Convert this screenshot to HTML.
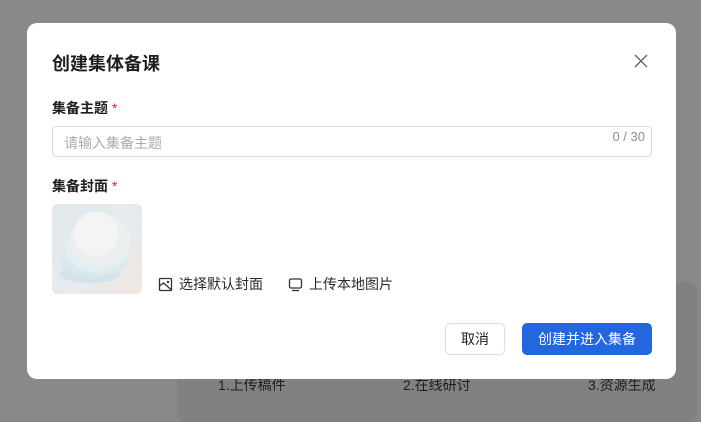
<!DOCTYPE html>
<html><head><meta charset="utf-8"><style>
*{margin:0;padding:0;box-sizing:border-box}
html,body{width:701px;height:412px}
body{background:#898989;position:relative;overflow:hidden;font-family:"Liberation Sans","Noto Sans CJK SC",sans-serif}
.panel{position:absolute;left:177px;top:282px;width:520px;height:140px;background:#818181;border-radius:8px}
.step{position:absolute;top:375px;font-size:14px;color:#1e1e1e}
.modal{position:absolute;left:27px;top:23px;width:649px;height:356px;background:#fff;border-radius:10px}
.title{position:absolute;left:25px;top:27px;font-size:18px;font-weight:bold;color:#1f1f1f}
.close{position:absolute;left:606px;top:30px}
.label{position:absolute;left:25px;font-size:14px;font-weight:bold;color:#1f1f1f}
.label span{color:#e0262b;font-weight:normal}
.input{position:absolute;left:25px;top:103px;width:600px;height:31px;border:1px solid #dcdde2;border-radius:4px}
.ph{position:absolute;left:11px;top:6px;font-size:14px;color:#a8abb2}
.cnt{position:absolute;right:6px;top:2px;font-size:13px;color:#8a8d94}
.cover{position:absolute;left:25px;top:181px;width:90px;height:90px;border-radius:5px;background:linear-gradient(135deg,#dfe9ec,#e7eaee 60%,#f1e6e0);overflow:hidden}
.act{position:absolute;top:251px;font-size:14px;color:#2b2b2b;display:flex;align-items:center;gap:6px}
.btn{position:absolute;top:300px;height:32px;border-radius:5px;font-size:14px;display:flex;align-items:center;justify-content:center}
</style></head><body>
<div class="panel"></div>
<div class="step" style="left:218px">1.上传稿件</div>
<div class="step" style="left:403px">2.在线研讨</div>
<div class="step" style="left:588px">3.资源生成</div>
<div class="modal">
<div class="title">创建集体备课</div>
<svg class="close" width="16" height="16" viewBox="0 0 16 16"><path d="M2 2L14 14M14 2L2 14" stroke="#666" stroke-width="1.4"/></svg>
<div class="label" style="top:75px">集备主题 <span>*</span></div>
<div class="input"><div class="ph">请输入集备主题</div><div class="cnt">0 / 30</div></div>
<div class="label" style="top:153px">集备封面 <span>*</span></div>
<div class="cover"><svg width="90" height="90" viewBox="0 0 90 90">
<ellipse cx="38" cy="70" rx="30" ry="9" fill="#d3e3e9"/>
<ellipse cx="42" cy="56" rx="34" ry="16" fill="#d9e9ec"/>
<ellipse cx="45" cy="44" rx="32" ry="24" fill="#e4eef0"/>
<ellipse cx="48" cy="36" rx="30" ry="26" fill="#eceff0"/>
<ellipse cx="44" cy="30" rx="22" ry="22" fill="#f4f4f4"/>
</svg></div>
<div class="act" style="left:131px"><svg width="15" height="15" viewBox="0 0 15 15"><rect x="1.5" y="1.5" width="12" height="12" rx="1" fill="none" stroke="#333" stroke-width="1.3"/><path d="M1.5 9L5.5 6L13.5 13" fill="none" stroke="#333" stroke-width="1.3"/><circle cx="10" cy="5" r="1.2" fill="#333"/></svg>选择默认封面</div>
<div class="act" style="left:261px"><svg width="15" height="15" viewBox="0 0 15 15"><rect x="1.5" y="2" width="12" height="9" rx="1.5" fill="none" stroke="#333" stroke-width="1.3"/><path d="M4 13.5H11" stroke="#333" stroke-width="1.3"/></svg>上传本地图片</div>
<div class="btn" style="left:418px;width:60px;border:1px solid #dcdde2;color:#1f1f1f">取消</div>
<div class="btn" style="left:495px;width:130px;background:#2267e0;color:#fff">创建并进入集备</div>
</div>
</body></html>
